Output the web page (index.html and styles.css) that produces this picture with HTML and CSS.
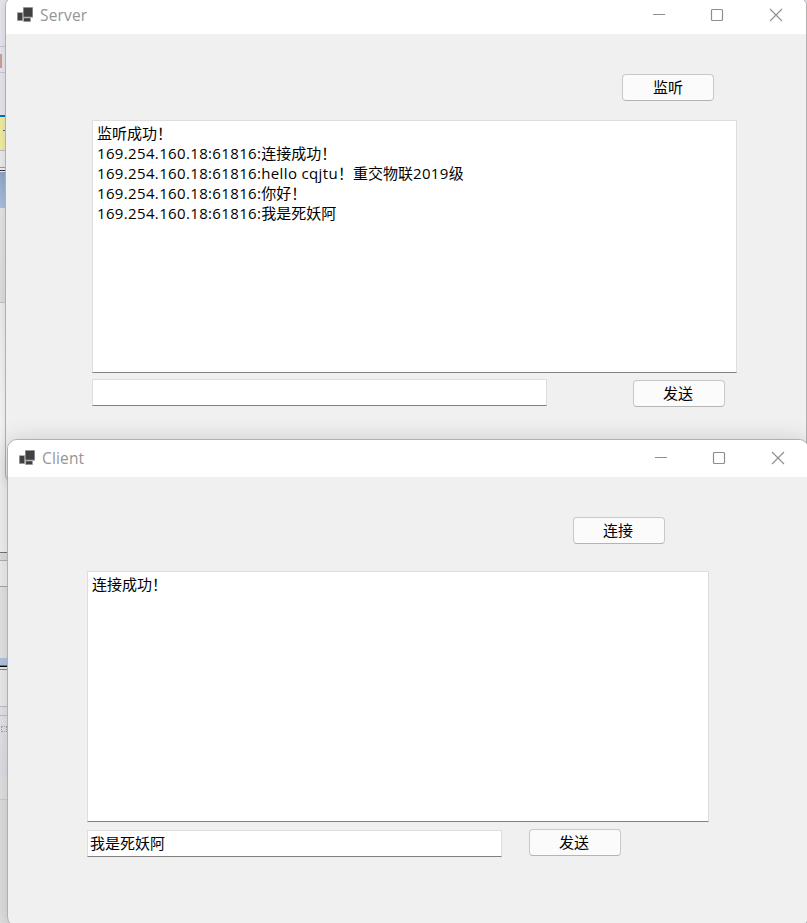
FILE: index.html
```html
<!DOCTYPE html>
<html lang="zh-CN">

<head>
    <meta charset="UTF-8">
    <meta name="viewport" content="width=device-width, initial-scale=1.0">
    <title>Server / Client</title>
    <link rel="stylesheet" href="styles.css">
</head>

<body>
    <div class="desktop">
        <!-- edge of the editor behind the windows -->
        <div class="editor">
            <div class="strip toolbar-top"></div>
            <div class="strip toolbar-mid"><i class="mark"></i></div>
            <div class="strip toolbar-low"></div>
            <div class="strip tab-line"></div>
            <div class="strip notice"><i class="notice-mark"></i></div>
            <div class="strip header"></div>
            <div class="strip selected"></div>
            <div class="strip list"></div>
            <div class="strip page"></div>
            <div class="strip split"></div>
            <div class="strip row"></div>
            <div class="strip panel"></div>
            <div class="strip panel-selected"></div>
            <div class="strip panel-header"></div>
            <div class="strip gap"></div>
            <div class="strip output"><i class="grip"></i></div>
            <div class="strip bottom"></div>
        </div>

        <div class="window server">
            <div class="titlebar">
                <svg class="app-icon" width="18" height="16" viewBox="0 0 18 16">
                    <path fill="#b4b4b4" d="M0 5h6v9H0zM6 0h10v11H6zM6 10h8v5H6z"/>
                    <path fill="#404040" d="M.7 6h4.6v7.3H.7zM6.6.7h8.8v9.1H6.6zM7 11.3h6.2v3H7z"/>
                </svg>
                <span class="title">Server</span>
                <svg class="controls" width="132" height="14" viewBox="0 0 132 14" fill="none" stroke="#8e8e8e">
                    <path d="M1 6.5h12"/>
                    <rect x="59.5" y="1.5" width="11" height="11" rx="1" stroke-width="1.2"/>
                    <path d="M118 1l12 12M130 1l-12 12" stroke-width="1.1"/>
                </svg>
            </div>
            <div class="content">
                <button class="btn listen">监听</button>
                <div class="log">
                    <div>监听成功！</div>
                    <div><span class="latin">169.254.160.18:61816:</span>连接成功！</div>
                    <div><span class="latin">169.254.160.18:61816:</span><span class="latin">hello cqjtu</span>！重交物联<span class="latin">2019</span>级</div>
                    <div><span class="latin">169.254.160.18:61816:</span>你好！</div>
                    <div><span class="latin">169.254.160.18:61816:</span>我是死妖阿</div>
                </div>
                <div class="send-row">
                    <input class="message" type="text">
                    <button class="btn">发送</button>
                </div>
            </div>
        </div>

        <div class="window client">
            <div class="titlebar">
                <svg class="app-icon" width="18" height="16" viewBox="0 0 18 16">
                    <path fill="#b4b4b4" d="M0 5h6v9H0zM6 0h10v11H6zM6 10h8v5H6z"/>
                    <path fill="#404040" d="M.7 6h4.6v7.3H.7zM6.6.7h8.8v9.1H6.6zM7 11.3h6.2v3H7z"/>
                </svg>
                <span class="title">Client</span>
                <svg class="controls" width="132" height="14" viewBox="0 0 132 14" fill="none" stroke="#8e8e8e">
                    <path d="M1 6.5h12"/>
                    <rect x="59.5" y="1.5" width="11" height="11" rx="1" stroke-width="1.2"/>
                    <path d="M118 1l12 12M130 1l-12 12" stroke-width="1.1"/>
                </svg>
            </div>
            <div class="content">
                <button class="btn connect">连接</button>
                <div class="log">
                    <div>连接成功！</div>
                </div>
                <div class="send-row">
                    <input class="message" type="text" value="我是死妖阿">
                    <button class="btn">发送</button>
                </div>
            </div>
        </div>
    </div>
</body>

</html>
```
FILE: styles.css
```css
* {
    box-sizing: border-box;
}

body {
    margin: 0;
    font-family: "Noto Sans CJK SC", "Open Sans", sans-serif;
    font-size: 15px;
    color: #000;
}

.desktop {
    position: relative;
    width: 807px;
    height: 923px;
    overflow: hidden;
    background-color: #c8c8c8;
}

/* editor */
.editor {
    display: flex;
    flex-direction: column;
    width: 807px;
}

.strip {
    flex: none;
}

.toolbar-top {
    height: 47px;
    background-color: #e3e3eb;
    border-bottom: 1px solid #c4c4d2;
}

.toolbar-mid {
    height: 26px;
    padding-top: 7px;
    background-color: #e3e3e9;
    border-bottom: 1px solid #c4c4d2;
}

.mark {
    display: block;
    width: 2px;
    height: 14px;
    background-color: #c79e94;
}

.toolbar-low {
    height: 42px;
    background-color: #e3e3e8;
}

.tab-line {
    height: 2px;
    background-color: #0072c0;
}

.notice {
    height: 34px;
    padding: 13px 0 0 3px;
    background-color: #eee9a0;
    border-bottom: 1px solid #b9b9c6;
}

.notice-mark {
    display: block;
    width: 3px;
    height: 10px;
    border-top: 1px solid #3c62b4;
    border-right: 1px solid #c2a08c;
}

.header {
    height: 21px;
    background: linear-gradient(#e8e8e8 16px, #999 16px, #999 17px, #eee 17px, #eee 19px, #333 19px, #333 20px, #eee 20px);
}

.selected {
    height: 36px;
    background: linear-gradient(#8da5c2, #a8bfdc);
}

.list {
    height: 95px;
    background: linear-gradient(#e2e2e2, #dadada);
    border-bottom: 1px solid #c0c0c0;
}

.page {
    height: 250px;
    background: linear-gradient(#eaeaea, #f6f6f6 60%, #f8f8f8);
    border-bottom: 1px solid #777;
}

.split {
    height: 8px;
    background-color: #e4e4e4;
    border-bottom: 1px solid #b5b5b5;
}

.row {
    height: 26px;
    background-color: #f4f4f4;
    border-bottom: 1px solid #aaa;
}

.panel {
    height: 71px;
    background-color: #eaeaea;
}

.panel-selected {
    height: 9px;
    background-color: #b6cae6;
    border-bottom: 1px solid #000;
    box-shadow: inset 0 -1px #22a0b0;
}

.panel-header {
    height: 40px;
    background: linear-gradient(#f2f2f2 2px, #888 2px, #888 3px, #f2f2f2 3px);
    border-bottom: 1px solid #c4c4d4;
}

.gap {
    height: 9px;
    background-color: #eaeaf0;
    border-bottom: 1px solid #c4c4d4;
}

.output {
    height: 84px;
    padding: 10px 0 0 1px;
    background: linear-gradient(#ebebf0, #e4e4eb 59px, #e8e8e8 59px);
    border-bottom: 1px solid #d4d4d4;
}

.grip {
    display: block;
    width: 6px;
    height: 6px;
    border: 1px dotted #aaa;
}

.bottom {
    height: 124px;
    background-color: #e4e4e7;
}

/* windows */
.window {
    position: absolute;
    width: 802px;
    height: 488px;
    background-color: #f0f0f0;
    border: 1px solid #b0b0b0;
    border-radius: 10px;
    overflow: hidden;
}

.server {
    left: 5px;
    top: -4px;
    box-shadow: 0 2px 8px rgba(0, 0, 0, 0.1);
}

.client {
    left: 7px;
    top: 439px;
    box-shadow: 0 4px 26px rgba(0, 0, 0, 0.2);
}

.titlebar {
    display: flex;
    align-items: center;
    height: 37px;
    padding-left: 11px;
    background-color: #fff;
}

.app-icon {
    margin-bottom: 2px;
}

.title {
    margin-left: 5px;
    margin-bottom: 2px;
    font-family: "Open Sans", sans-serif;
    font-size: 15.5px;
    letter-spacing: 0.15px;
    color: #959595;
}

.controls {
    margin-left: auto;
    margin-right: 22px;
    margin-bottom: 2px;
}

.content {
    display: flex;
    flex-direction: column;
    align-items: flex-start;
}

.btn {
    width: 92px;
    height: 27px;
    padding: 0 2px 1px 0;
    font-family: inherit;
    font-size: 15px;
    line-height: 24px;
    color: #000;
    background-color: #fbfbfb;
    border: 1px solid #c8c8c8;
    border-bottom-color: #b4b4b4;
    border-radius: 4px;
}

.log {
    padding: 2px 4px;
    line-height: 20px;
    white-space: nowrap;
    background-color: #fff;
    border: 1px solid #dedede;
    border-bottom-color: #808080;
}

.latin {
    font-family: "Open Sans", sans-serif;
    font-size: 15px;
    letter-spacing: 0.35px;
    line-height: 1;
}

.send-row {
    display: flex;
}

.message {
    height: 27px;
    padding: 0 2px 2px;
    font-family: inherit;
    font-size: 15px;
    color: #000;
    background-color: #fff;
    border: 1px solid #dedede;
    border-bottom-color: #808080;
    border-radius: 0;
    outline: none;
}

.server .content {
    padding: 40px 0 0 86px;
}

.server .listen {
    margin-left: 530px;
    padding-right: 0;
}

.server .log {
    width: 645px;
    height: 253px;
    margin-top: 19px;
}

.server .send-row {
    gap: 86px;
    margin-top: 6px;
}

.server .message {
    width: 455px;
}

.server .send-row .btn {
    margin-top: 1px;
}

.client .content {
    padding: 40px 0 0 79px;
}

.client .connect {
    margin-left: 486px;
}

.client .log {
    width: 622px;
    height: 251px;
    margin-top: 27px;
}

.client .send-row {
    gap: 27px;
    margin-top: 7px;
}

.client .message {
    width: 415px;
    margin-top: 1px;
}
```
